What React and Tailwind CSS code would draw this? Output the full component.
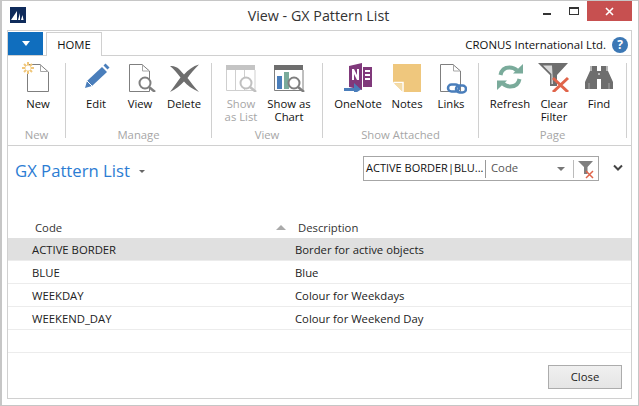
const font = "font-['Open_Sans','Noto_Sans',sans-serif]";

const NewIcon = () => (
  <svg width="32" height="32" viewBox="0 0 32 32" fill="none">
    <path d="M5.5 4.5H18L26.5 12V31.5H5.5Z" fill="#fff" stroke="#7f7f7f" />
    <path d="M18.5 4.5V11.5H26" stroke="#a6a6a6" />
    <g stroke="#f0c67a" strokeWidth="2">
      <path d="M6 2V14M0 8H12M2 4L10 12M10 4L2 12" />
    </g>
    <circle cx="6" cy="8" r="2.6" fill="#fff" />
  </svg>
);

const EditIcon = () => (
  <svg width="32" height="32" viewBox="0 0 32 32" fill="none">
    <path d="M5 28L7 21L22 7L27 12L12 26Z" fill="#4a7ebb" />
    <path d="M23.5 5.5L25.5 3.5L29.5 7.5L27.5 9.5Z" fill="#4a7ebb" />
    <path d="M7 21L12 26" stroke="#fff" strokeWidth="1" />
  </svg>
);

const Lens = ({ cx, cy, color = "#7f7f7f" }) => (
  <g fill="none" stroke={color}>
    <circle cx={cx} cy={cy} r="5.5" strokeWidth="2" fill="#fff" />
    <path d={`M${cx + 4} ${cy + 4}L${cx + 10} ${cy + 9}`} strokeWidth="2.5" />
  </g>
);

const ViewIcon = () => (
  <svg width="32" height="32" viewBox="0 0 32 32" fill="none">
    <path d="M5.5 4.5H18L25.5 11V31.5H5.5Z" fill="#fff" stroke="#7f7f7f" />
    <path d="M18.5 4.5V11H25" stroke="#a6a6a6" />
    <Lens cx={21} cy={23} />
  </svg>
);

const DeleteIcon = () => (
  <svg width="32" height="32" viewBox="0 0 32 32" fill="none">
    <path d="M2 6C9 5 13 11 16 14.500C20 10 25 6 31 4.500C26 10 22 14 19.500 18C23 22 26 27 31 32C24 29 19 25 16 21.500C12 25.500 8 29.500 2 32C6 27 9 22 12.500 17.500C9 13 6 9 2 6Z" fill="#6e6e6e" />
  </svg>
);

const ListIcon = () => (
  <svg width="32" height="32" viewBox="0 0 32 32" fill="none">
    <path d="M1 5H30V10H1Z" fill="#c4c4c4" />
    <path d="M1.500 10V30.500H30V10M10.500 10V30M19.500 10V30" stroke="#cfcfcf" />
    <Lens cx={21} cy={23} color="#c0c0c0" />
  </svg>
);

const ChartIcon = () => (
  <svg width="32" height="32" viewBox="0 0 32 32" fill="none">
    <path d="M1 5H30V10H1Z" fill="#6e6e6e" />
    <path d="M1.500 10V30.500H30V10" stroke="#7f7f7f" />
    <rect x="4" y="16" width="5" height="13" fill="#4a7ebb" />
    <rect x="11" y="12" width="5" height="17" fill="#7aab9b" />
    <Lens cx={21} cy={23} />
  </svg>
);

const OneNoteIcon = () => (
  <svg width="32" height="32" viewBox="0 0 32 32" fill="none">
    <path d="M7 6L20 3V30L7 27Z" fill="#80397b" />
    <path d="M21 7H30V27H21Z" fill="#80397b" />
    <path d="M23 10H28V12H23ZM23 14H28V16H23ZM23 18H28V20H23Z" fill="#fff" />
    <path d="M2 28H14V31H2Z" fill="#4a7ebb" />
    <path d="M12 23L19 29.500L12 34Z" fill="#4a7ebb" />
    <path d="M10 20V9H12L15 15V9H17V20H15L12 14V20Z" fill="#fff" />
  </svg>
);

const NotesIcon = () => (
  <svg width="32" height="32" viewBox="0 0 32 32" fill="none">
    <path d="M2 4H30V32H12L2 22Z" fill="#efc77d" />
    <path d="M2.500 22.500H12V32" stroke="#fff" strokeWidth="1.500" />
    <path d="M3 23.500H11V31Z" fill="#f4dca8" />
  </svg>
);

const LinksIcon = () => (
  <svg width="32" height="34" viewBox="0 0 32 34" fill="none">
    <path d="M5.500 4.500H18L25.500 11V31.500H5.500Z" fill="#fff" stroke="#7f7f7f" />
    <path d="M18.500 4.500V11H25" stroke="#a6a6a6" />
    <rect x="13" y="24.500" width="11" height="7" rx="3.500" fill="#fff" stroke="#4a7ebb" strokeWidth="2.500" />
    <rect x="21" y="25.500" width="10" height="7" rx="3.500" fill="none" stroke="#4a7ebb" strokeWidth="2.500" />
  </svg>
);

const RefreshIcon = () => (
  <svg width="32" height="32" viewBox="0 0 32 32" fill="none">
    <path d="M6.500 15C7.500 10 11 7.500 15.500 7.500C18.500 7.500 21 8.500 23 10.500" stroke="#7aab9b" strokeWidth="4" />
    <path d="M19 13.500H29V4Z" fill="#7aab9b" />
    <path d="M25.500 19C24.500 24 21 26.500 16.500 26.500C13.500 26.500 11 25.500 9 23.500" stroke="#7aab9b" strokeWidth="4" />
    <path d="M13 20.500H3V30Z" fill="#7aab9b" />
  </svg>
);

const ClearFilterIcon = () => (
  <svg width="32" height="32" viewBox="0 0 32 32" fill="none">
    <path d="M0 3H30L19 15V26H12V15Z" fill="#6e6e6e" />
    <path d="M5 5.500H14L15 24H13.500V14Z" fill="#d9d9d9" />
    <path d="M15 18L30 32M30 18L15 32" stroke="#e0644a" strokeWidth="3" />
  </svg>
);

const FindIcon = () => (
  <svg width="32" height="32" viewBox="0 0 32 32" fill="none">
    <path d="M7 6H14V11H18V6H25V11L30 22V29H18V19H14V29H2V22L7 11Z" fill="#6e6e6e" />
    <path d="M8 6V11M24 6V11" stroke="#fff" />
    <path d="M15 14H17" stroke="#fff" />
    <path d="M6 23V29M26 23V29" stroke="#a6a6a6" />
  </svg>
);

const AppLogo = () => (
  <svg width="16" height="16" viewBox="0 0 16 16">
    <rect width="16" height="16" fill="#0f2b5b" />
    <path d="M1 13L7 4V13ZM8 13L10 6V13ZM11 13L12.500 8L13.500 13Z" fill="#fff" />
  </svg>
);

const FilterClearSmall = () => (
  <svg width="18" height="20" viewBox="0 0 18 20" fill="none">
    <path d="M1 2H16L10.500 8V15H7V8Z" fill="#7f7f7f" />
    <path d="M9 12L16 19M16 12L9 19" stroke="#e0644a" strokeWidth="1.500" />
  </svg>
);

const groups = [
  { label: "New", w: "w-[58px]", pad: "pl-[3px]", items: [{ Icon: NewIcon, text: "New", w: "w-[54px]" }] },
  {
    label: "Manage",
    w: "w-[146px]",
    pad: "pl-[8px]",
    items: [
      { Icon: EditIcon, text: "Edit", w: "w-[44px]" },
      { Icon: ViewIcon, text: "View", w: "w-[44px]" },
      { Icon: DeleteIcon, text: "Delete", w: "w-[44px]" },
    ],
  },
  {
    label: "View",
    w: "w-[111px]",
    pad: "pl-[5px]",
    items: [
      { Icon: ListIcon, text: "Show\nas List", w: "w-[48px]", off: true },
      { Icon: ChartIcon, text: "Show as\nChart", w: "w-[48px]" },
    ],
  },
  {
    label: "Show Attached",
    w: "w-[156px]",
    pad: "pl-[8px]",
    items: [
      { Icon: OneNoteIcon, text: "OneNote", w: "w-[54px]" },
      { Icon: NotesIcon, text: "Notes", w: "w-[44px]" },
      { Icon: LinksIcon, text: "Links", w: "w-[44px]" },
    ],
  },
  {
    label: "Page",
    w: "w-[148px]",
    pad: "pl-[9px]",
    items: [
      { Icon: RefreshIcon, text: "Refresh", w: "w-[44px]" },
      { Icon: ClearFilterIcon, text: "Clear\nFilter", w: "w-[44px]" },
      { Icon: FindIcon, text: "Find", w: "w-[46px]" },
    ],
  },
];

const rows = [
  ["ACTIVE BORDER", "Border for active objects"],
  ["BLUE", "Blue"],
  ["WEEKDAY", "Colour for Weekdays"],
  ["WEEKEND_DAY", "Colour for Weekend Day"],
  ["", ""],
];

const RibbonButton = ({ Icon, text, w, off }) => (
  <div className={`${w} flex flex-col items-center shrink-0 -mt-[3px]`}>
    <div className="h-[34px] w-[32px] flex justify-center">
      <Icon />
    </div>
    <div className={`mt-[3px] text-center whitespace-pre-line text-[11.3px] leading-[13px] ${off ? "text-[#a6a6a6]" : "text-[#111]"}`}>
      {text}
    </div>
  </div>
);

export default function App() {
  return (
    <div className={`${font} w-[639px] h-[406px] bg-white border border-[#c6c6c6] border-l-2 flex flex-col overflow-hidden text-[#222]`}>
      {/* title bar */}
      <div className="h-[29px] shrink-0 flex items-start">
        <div className="ml-[8px] mt-[6px] w-[16px]">
          <AppLogo />
        </div>
        <div className="flex-1 text-center text-[14.3px] leading-[29px] pl-[68px] text-[#333]">View - GX Pattern List</div>
        <div className="w-[16px] h-[2px] mt-[12px] flex justify-start">
          <div className="w-[8px] h-[2px] bg-[#333]" />
        </div>
        <div className="w-[10px] h-[8px] mt-[6px] ml-[10px] border border-t-2 border-[#333]" />
        <div className="w-[45px] h-[20px] ml-[8px] mr-[6px] bg-[#c75050] text-white flex items-center justify-center">
          <svg width="9" height="9" viewBox="0 0 9 9">
            <path d="M1 1L8 8M8 1L1 8" stroke="#fff" strokeWidth="1.600" />
          </svg>
        </div>
      </div>

      {/* main panel */}
      <div className="ml-[5px] mr-[6px] h-[369px] border border-[#d0d0d0] flex flex-col">
        {/* tab row */}
        <div className="h-[24px] shrink-0 flex items-end">
          <div className="h-[23px] w-[35px] bg-[#106ebe] flex items-center justify-center">
            <div className="w-0 h-0 border-x-[4px] border-x-transparent border-t-[5px] border-t-white" />
          </div>
          <div className="ml-[3px] h-[24px] w-[56px] border border-b-0 border-[#d0d0d0] bg-white text-center text-[11.3px] leading-[24px] text-[#111] relative top-[1px] z-10">HOME</div>
          <div className="flex-1 text-right pr-[25px] text-[11.4px] leading-[21px] text-[#111]">CRONUS International Ltd.</div>
          <div className="absolute left-[612px] top-[37px] w-[16px] h-[16px] rounded-full bg-[#3c78b5] text-white text-[12px] leading-[16px] font-bold text-center">?</div>
        </div>

        {/* ribbon */}
        <div className="h-[91px] shrink-0 border-y border-[#d0d0d0] flex">
          {groups.map((g, i) => (
            <div key={g.label} className={`${g.w} shrink-0 flex flex-col`}>
              <div className={`flex-1 flex flex-col ${i < 5 ? "border-r" : ""} border-[#d0d0d0] mt-[7px] mb-[7px]`}>
                <div className={`flex-1 flex ${g.pad}`}>
                  {g.items.map((item) => (
                    <RibbonButton key={item.text} {...item} />
                  ))}
                </div>
                <div className="text-center text-[11.3px] leading-[13px] text-[#a6a6a6] -mb-[3px]">{g.label}</div>
              </div>
            </div>
          ))}
        </div>

        {/* page heading + filter */}
        <div className="h-[92px] shrink-0 flex items-start relative">
          <div className="ml-[7px] mt-[15px] text-[#2b7cd3] text-[16.7px] leading-[20px]">GX Pattern List</div>
          <div className="ml-[9px] mt-[24px] w-0 h-0 border-x-[3px] border-x-transparent border-t-[3px] border-t-[#666]" />
          <div className="absolute left-[355px] top-[10px] w-[236px] h-[25px] border border-[#a6a6a6] flex items-center text-[11px]">
            <div className="w-[122px] pl-[2px] text-[#111] whitespace-nowrap border-r border-[#999] h-[18px] leading-[16px] overflow-hidden">ACTIVE BORDER|BLU...</div>
            <div className="flex-1 pl-[5px] text-[#555] text-[11.3px]">Code</div>
            <div className="w-0 h-0 mr-[8px] border-x-[4px] border-x-transparent border-t-[4px] border-t-[#777]" />
            <div className="w-px h-[18px] bg-[#bbb]" />
            <div className="w-[24px] flex justify-center"><FilterClearSmall /></div>
          </div>
          <svg className="absolute left-[604px] top-[18px]" width="12" height="8" viewBox="0 0 12 8" fill="none">
            <path d="M2 1.500L6 5.500L10 1.500" stroke="#444" strokeWidth="2" />
          </svg>
        </div>

        {/* list */}
        <div className="flex-1 flex flex-col">
          <div className="relative">
            <div className="absolute left-[268px] -top-[13px] w-0 h-0 border-x-[5px] border-x-transparent border-b-[5px] border-b-[#aaa]" />
            <div className="absolute left-[27px] -top-[18px] text-[11.3px] leading-[16px] text-[#333]">Code</div>
            <div className="absolute left-[290px] -top-[18px] text-[11.3px] leading-[16px] text-[#333]">Description</div>
          </div>
          {rows.map(([code, desc], i) => (
            <div key={i} className={`h-[23px] shrink-0 grid grid-cols-[287px_1fr] items-center border-b border-[#ececec] pt-[1px] text-[11.3px] leading-[20px] text-[#222] ${i === 0 ? "bg-[#e0e0e0]" : ""}`}>
              <div className="pl-[24px]">{code}</div>
              <div>{desc}</div>
            </div>
          ))}
          <div className="flex-1 flex justify-end items-start pt-[12px] pr-[9px]">
            <button className="w-[74px] h-[24px] border border-[#acacac] bg-gradient-to-b from-[#f0f0f0] to-[#e5e5e5] text-[11.3px] text-[#222]">Close</button>
          </div>
        </div>
      </div>
    </div>
  );
}
